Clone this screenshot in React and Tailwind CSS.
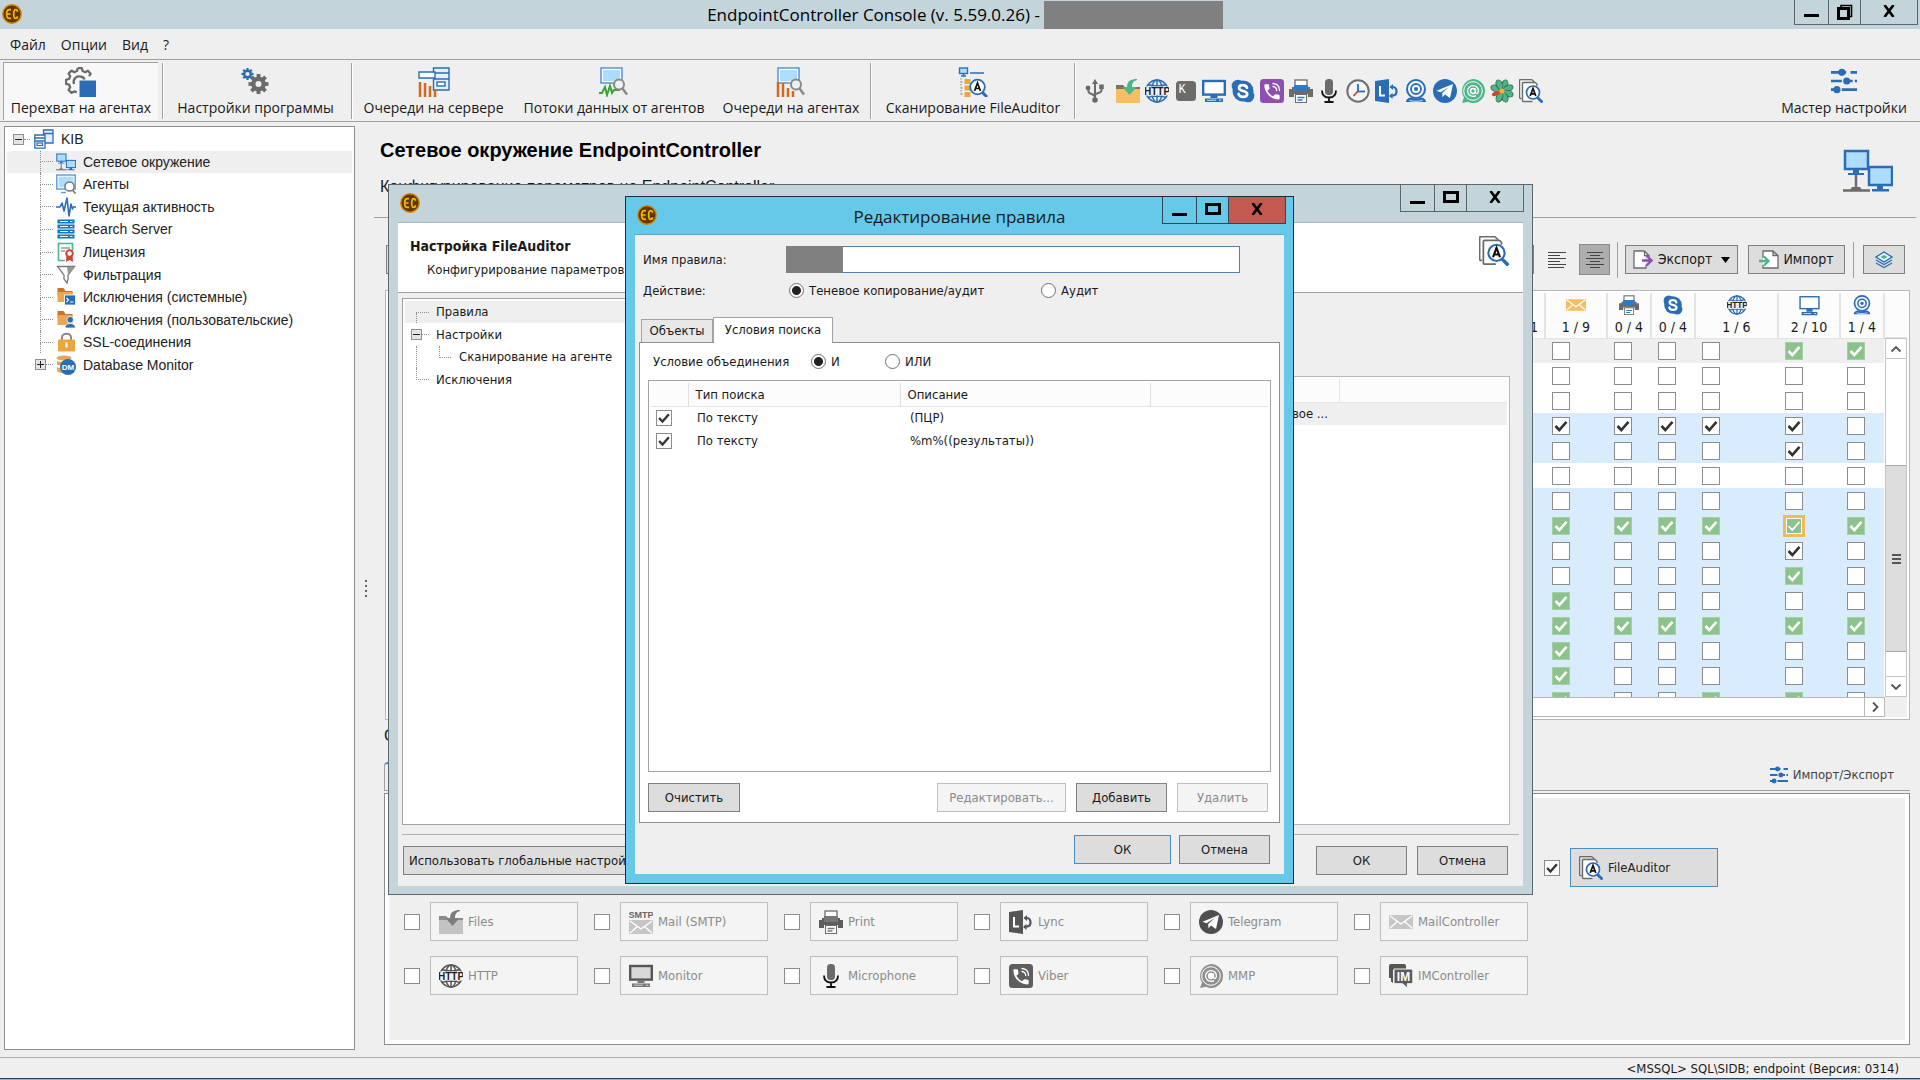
import React from "react";

const TAHOMA = "font-['DejaVu_Sans_Condensed','DejaVu_Sans',sans-serif]";
const SEGOE = "font-['Open_Sans','Noto_Sans',sans-serif]";
const ARIAL = "font-['Liberation_Sans',Arial,sans-serif]";

const BLUE = "#2a6db5";
const SKY = "#addcff";
const GRAY = "#6b6b6b";
const ORANGE = "#f7bd63";
const GREEN = "#4eb489";

function Svg({ size = 24, w, box = 24, boxW, children }) {
  return (
    <svg width={w || size} height={size} viewBox={`0 0 ${boxW || box} ${box}`} fill="none" className="shrink-0" aria-hidden="true">
      {children}
    </svg>
  );
}

/* ---------- icons ---------- */

function EcLogo() {
  return (
    <Svg size={20} box={20}>
      <circle cx="10" cy="10" r="9.2" fill="#5c3800" stroke="#d98200" strokeWidth="1.4" />
      <path d="M9 5.6H7.4C5.6 5.6 4.6 7 4.6 10s1 4.400 2.800 4.400H9M5 10h3.600M15.400 7.800V7.400c0-1.200-.7-1.800-1.700-1.800-1.300 0-2 .9-2 4.400s.7 4.400 2 4.400c1 0 1.700-.6 1.700-1.800v-.4" stroke="#ffb400" strokeWidth="1.7" />
    </Svg>
  );
}

function Usb() {
  return (
    <Svg>
      <path d="M12 4v16M5.500 10v2.500c0 3 6.500 2 6.500 5.500M18.500 10v1.500c0 3-6.500 2-6.500 5" stroke={GRAY} strokeWidth="2" />
      <path d="M12 0l3 5H9z" fill={GRAY} />
      <circle cx="12" cy="21" r="2.800" fill={GRAY} />
      <circle cx="5" cy="9" r="2.400" fill={GRAY} />
      <rect x="16.200" y="5.500" width="4.600" height="4.600" fill={GRAY} />
    </Svg>
  );
}

function Files({ mono }) {
  return (
    <Svg>
      <path d="M0 6h7l2 2h15v3H0z" fill={mono ? "#8a8a8a" : "#7a7463"} />
      <path d="M0 10h24v14H0z" fill={mono ? "#c3c3c3" : ORANGE} />
      <path d="M21 0c-6 0-10 2-10 8H6.500l7 8 7-8H16c0-4 1.500-6 5-7z" fill={mono ? "#7d7d7d" : GREEN} />
    </Svg>
  );
}

function Http({ mono, size = 24 }) {
  const c = mono ? "#555" : BLUE;
  const bg = mono ? "#f4f4f4" : "#efefef";
  return (
    <Svg size={size}>
      <circle cx="12" cy="12" r="11" stroke={c} strokeWidth="1.500" />
      <ellipse cx="12" cy="12" rx="5.500" ry="11" stroke={c} strokeWidth="1.500" />
      <path d="M12 1v22M3 5.500c5 2 13 2 18 0M3 18.500c5-2 13-2 18 0" stroke={c} strokeWidth="1.500" />
      <rect x="0" y="7.500" width="24" height="9" fill={bg} />
      <text x="12" y="16" textAnchor="middle" fontSize="10" fontWeight="700" fontFamily="Liberation Sans" fill="#222">HTTP</text>
    </Svg>
  );
}

function KeyK() {
  return (
    <Svg>
      <rect x="2" y="2" width="20" height="20" rx="3.500" fill={GRAY} />
      <text x="4.500" y="14" fontSize="12" fontFamily="Liberation Mono" fill="#fff">K</text>
    </Svg>
  );
}

function Monitor({ mono, open, size = 24 }) {
  const c = mono ? "#555" : BLUE;
  return (
    <Svg size={size}>
      <rect x="1.200" y="2" width="21.600" height="13.600" stroke={c} strokeWidth={open ? 1.600 : 2.400} fill={mono ? "#d8d8d8" : "#fff"} />
      <path d="M8.500 16h7v3h-7zM3 19.500h18V23H3z" fill={mono ? "#777" : c} />
      <path d="M5 21.200h9M17 21.200h2.500" stroke={mono ? "#ccc" : "#cfe4fa"} strokeWidth="1" />
    </Svg>
  );
}

function Skype({ size = 24 }) {
  return (
    <Svg size={size}>
      <circle cx="12" cy="12" r="10.500" fill={BLUE} />
      <circle cx="7" cy="7" r="6.300" fill={BLUE} />
      <circle cx="17" cy="17" r="6.300" fill={BLUE} />
      <path d="M16 8.800C15.500 7 14 6.200 12 6.200c-2.400 0-4 1.100-4 2.800 0 4 8.200 2 8.200 6 0 1.800-1.700 2.900-4.200 2.900-2.200 0-3.900-.9-4.400-2.900" stroke="#fff" strokeWidth="2.700" strokeLinecap="round" />
    </Svg>
  );
}

function Viber({ mono }) {
  return (
    <Svg>
      <rect x="0" y="0" width="24" height="24" rx="3.500" fill={mono ? "#5e5e5e" : "#8d50b0"} />
      <path transform="translate(1.800 2.600) scale(.85)" d="M6.620 10.790c1.440 2.830 3.760 5.140 6.590 6.590l2.200-2.200c.27-.27.67-.36 1.020-.24 1.120.37 2.330.57 3.570.57.550 0 1 .45 1 1V20c0 .55-.45 1-1 1-9.390 0-17-7.610-17-17 0-.55.450-1 1-1h3.500c.55 0 1 .45 1 1 0 1.250.2 2.450.57 3.570.11.350.03.740-.25 1.020l-2.200 2.200z" fill="#fff" />
      <path d="M13 4.500c4 .3 6.500 3 6.500 7M13 7.500c2.300.3 3.600 1.700 3.700 4" stroke="#fff" strokeWidth="1.300" strokeLinecap="round" />
    </Svg>
  );
}

function Printer({ mono, size = 24 }) {
  return (
    <Svg size={size}>
      <rect x="6" y="1" width="12" height="7" fill="#fff" stroke={GRAY} strokeWidth="1.300" />
      <path d="M0 10h3V8h18v2h3v8h-5v-3H5v3H0z" fill={mono ? "#5e5e5e" : GRAY} />
      <path d="M5 6h14v6H5z" fill={mono ? "#777" : "#2f7ac6"} />
      <rect x="6.500" y="15.500" width="11" height="8" fill="#fff" stroke={GRAY} strokeWidth="1" />
      <path d="M8.500 18.500h7M8.500 21h5" stroke={mono ? "#777" : "#2f7ac6"} strokeWidth="1.300" />
    </Svg>
  );
}

function Mic() {
  return (
    <Svg>
      <rect x="8" y="0" width="8" height="16" rx="3.500" fill={GRAY} />
      <path d="M5 11.500c0 4.500 2.500 7 7 7s7-2.500 7-7M12 18v4.500M7.500 23h9" stroke="#111" strokeWidth="1.800" />
    </Svg>
  );
}

function Clock() {
  return (
    <Svg>
      <circle cx="12" cy="12" r="10.700" fill="#f4f4f4" stroke="#707070" strokeWidth="2" />
      <path d="M12 5v7" stroke={BLUE} strokeWidth="1.800" />
      <path d="M12 12.500h7" stroke={BLUE} strokeWidth="1.800" />
      <path d="M12 12l-4.500 5" stroke="#d1432f" strokeWidth="1.800" />
    </Svg>
  );
}

function Lync({ mono }) {
  const c = mono ? "#555" : BLUE;
  return (
    <Svg>
      <path d="M0 2l14-2v24L0 22z" fill={c} />
      <path d="M5 7v9.500h5" stroke="#fff" strokeWidth="2" />
      <path d="M15.500 8h2c2 0 4 1.500 4 4.500 0 2.500-1.500 4-4 4.200h-2" stroke={c} strokeWidth="2.200" />
      <path d="M18 5l-3.500 3L18 11zM17.500 14v6l-3.500-3z" fill={c} />
    </Svg>
  );
}

function Webcam({ size = 24 }) {
  return (
    <Svg size={size}>
      <circle cx="12" cy="10" r="9" stroke={BLUE} strokeWidth="2" fill="#f3f8fd" />
      <circle cx="12" cy="10" r="5" stroke={BLUE} strokeWidth="1.800" />
      <circle cx="12" cy="10" r="2" fill={BLUE} />
      <path d="M2 23c0-3 3-4.500 5-4.500 3 1.300 7 1.300 10 0 2 0 5 1.500 5 4.500z" fill={BLUE} />
      <path d="M5.500 21.500c4 1 9 1 13 0" stroke="#cfe4fa" strokeWidth="1" />
    </Svg>
  );
}

function Telegram({ mono }) {
  return (
    <Svg>
      <circle cx="12" cy="12" r="12" fill={mono ? "#4f4f4f" : BLUE} />
      <path d="M3.500 11.800L20 5l-3 14-5-3.500-2.500 2.700-.3-4.300L16 8l-8.500 5.300z" fill="#fff" />
    </Svg>
  );
}

function Mmp({ mono }) {
  const c = mono ? "#8f8f8f" : GREEN;
  return (
    <Svg>
      <path d="M12 0a12 12 0 110 24 12 12 0 01-5-1.200L1 24l2-5.500A12 12 0 0112 0z" fill={c} />
      <circle cx="12" cy="12" r="9.300" stroke="#fff" strokeWidth="1" />
      <circle cx="12" cy="12" r="2.400" stroke="#fff" strokeWidth="1.500" fill={mono ? "#fff" : "none"} />
      <path d="M14.500 9.500v3.700c0 2.200 2.900 1.900 2.900-1.200 0-3.300-2.400-5.400-5.400-5.400S6.600 9 6.600 12s2.400 5.400 5.400 5.400c1.200 0 2.200-.3 3-.8" stroke="#fff" strokeWidth="1.300" />
    </Svg>
  );
}

function Flower() {
  const petals = [22, 67, 112, 157, 202, 292, 337];
  return (
    <Svg>
      {petals.map((a) => (
        <ellipse key={a} cx="12" cy="5.200" rx="3.100" ry="5" fill={GREEN} stroke="#2f6f54" strokeWidth=".9" transform={`rotate(${a} 12 12)`} />
      ))}
      <ellipse cx="12" cy="5.600" rx="2.200" ry="4.400" fill="#d1432f" transform="rotate(247 12 12)" />
      <circle cx="12" cy="12" r="2.600" fill="#f5b041" />
    </Svg>
  );
}

function FileAuditor({ size = 24 }) {
  return (
    <Svg size={size}>
      <path d="M2.500 19.500H1.500c-.6 0-1-.4-1-1v-17c0-.6.400-1 1-1h11l3 2.500" stroke={GRAY} strokeWidth="1.300" />
      <path d="M13.500 22.500h-9c-.6 0-1-.4-1-1V4.500c0-.6.400-1 1-1h11c1 0 2.500 1 2.500 2.500v1" stroke={GRAY} strokeWidth="1.400" fill="#fff" />
      <circle cx="14" cy="13.500" r="6.500" fill="#fff" stroke={BLUE} strokeWidth="1.700" />
      <path d="M18.500 18.500l5 5" stroke={BLUE} strokeWidth="2.800" />
      <path d="M11.200 17l2.800-7.500L16.800 17M12.200 14.800h3.600" stroke="#111" strokeWidth="1.700" />
    </Svg>
  );
}

function Sliders({ size = 24 }) {
  return (
    <Svg size={size}>
      <path d="M0 4h14M18 4h6M0 12h10M14 12h6M22 12h2M0 20h6M10 20h14" stroke={BLUE} strokeWidth="2.500" />
      <circle cx="10" cy="4" r="3.300" fill={BLUE} />
      <circle cx="14.500" cy="12" r="3.300" fill={BLUE} />
      <circle cx="5.500" cy="20" r="3.300" fill={BLUE} />
    </Svg>
  );
}

function Mail({ mono, smtp, size = 24 }) {
  const fill = mono ? "#c6c6c6" : ORANGE;
  const y = smtp ? 10 : 5;
  return (
    <Svg size={size}>
      {smtp && (
        <text x="12" y="8" textAnchor="middle" fontSize="9" fontWeight="700" fontFamily="Liberation Sans" fill="#666">SMTP</text>
      )}
      <rect x="0" y={y} width="24" height="14" rx="1" fill={fill} />
      <path d={`M1 ${y + 1}l11 8 11-8M1 ${y + 13}l8-7M23 ${y + 13}l-8-7`} stroke="#fff" strokeWidth="1.400" />
    </Svg>
  );
}

function Im() {
  return (
    <Svg>
      <path d="M0 2C0 .9.9 0 2 0h13a2 2 0 012 2v4H4v13l-2-1.500V14H0z" fill="#555" />
      <path d="M5 5h16.500c1.300 0 2.300 1 2.300 2.300v10.400c0 1.200-.9 2-2 2h-3.500V24l-4.800-4.300H5z" fill="#5c5c5c" stroke="#f4f4f4" strokeWidth="1" />
      <text x="14.500" y="17" textAnchor="middle" fontSize="12" fontWeight="700" fontFamily="Liberation Sans" fill="#fff">IM</text>
    </Svg>
  );
}

function GearShape({ cx, cy, r, color, hole = 0.42, bg = "#efefef" }) {
  return (
    <g transform={`translate(${cx} ${cy}) scale(${r})`}>
      {[0, 45, 90, 135].map((a) => (
        <rect key={a} x="-.19" y="-1" width=".38" height="2" fill={color} transform={`rotate(${a})`} />
      ))}
      <circle r=".74" fill={color} />
      <circle r={hole} fill={bg} />
    </g>
  );
}

function InterceptIcon() {
  return (
    <Svg size={30} box={30} w={32} boxW={32}>
      <path d="M12.800 1h4l.8 3 2.500 1.200 2.800-1.500 2.700 3-1.500 2.600M12.800 1L12 4 9.200 5.200 6.500 3.600 3.600 6.500l1.600 2.800L4 12l-3 .8v4l3 .8 1.200 2.600-1.600 2.800 2.900 2.900 2.700-1.500 2.500 1" stroke={GRAY} strokeWidth="2.300" strokeLinejoin="round" />
      <path d="M9 17c-1.500-4.500 2-8.500 6.500-7.500 2 .3 3.500 1.500 4 3" stroke={GRAY} strokeWidth="2.300" />
      <rect x="14.500" y="13.500" width="16.500" height="16.500" fill={BLUE} />
    </Svg>
  );
}

function GearsIcon() {
  return (
    <Svg size={30} box={30}>
      <GearShape cx={6.5} cy={7} r={6} color={BLUE} hole={0.35} />
      <GearShape cx={17.5} cy={17} r={10} color={GRAY} hole={0.3} />
    </Svg>
  );
}

function ServerQueueIcon() {
  return (
    <Svg size={30} box={30} w={32} boxW={32}>
      <path d="M15.500 1H31v22H15.500zM15.500 6H31M15.500 12H31" stroke={BLUE} strokeWidth="1.400" fill="#e4f1fd" />
      <path d="M1 5h16v6H1z" stroke={BLUE} strokeWidth="1.400" fill="#fff" />
      <rect x="19" y="15" width="8" height="4" stroke={BLUE} strokeWidth="1.400" fill="#fff" />
      <path d="M2 15v15M7 16v14M12 19v11M17 23v7" stroke="#d2691e" strokeWidth="2.500" />
    </Svg>
  );
}

function AgentIcon({ bars }) {
  return (
    <Svg size={30} box={30}>
      <rect x="2" y="1" width="21" height="15" stroke="#5c9bd8" strokeWidth="1.600" fill="#fff" />
      <rect x="4" y="3" width="17" height="11" fill={SKY} />
      {bars ? (
        <path d="M2 15v15M7 16v14M12 21v9M17 24v6" stroke="#d2691e" strokeWidth="2.500" />
      ) : (
        <path d="M0 26h3l3-6 2 8 3-9 2 7 2-3h6" stroke="#35a535" strokeWidth="2" />
      )}
      <circle cx="20" cy="17.500" r="5" fill="#efefef" stroke="#8a8a8a" strokeWidth="2" />
      <path d="M23.500 21.500l4.500 6" stroke="#8a8a8a" strokeWidth="2.500" />
    </Svg>
  );
}

function ScanIcon() {
  return (
    <Svg size={30} box={30}>
      <rect x="1.500" y="1" width="8" height="5.500" fill={SKY} stroke={BLUE} strokeWidth="1.400" />
      <path d="M5.500 7v2.500M3 9h5M12 6h14" stroke={BLUE} strokeWidth="1.600" />
      <path d="M3 11v18M3 15h3M3 21h3M3 27h3" stroke="#888" strokeWidth="1" strokeDasharray="1.500 1.500" />
      <path d="M6.500 12h6v5h-6zM6.500 18.500h6v5h-6zM6.500 25h6v5h-6z" fill="#eda63a" />
      <circle cx="19.500" cy="20" r="7.300" fill="#fff" stroke={BLUE} strokeWidth="1.800" />
      <path d="M24.500 25.500l4.500 4.500" stroke={BLUE} strokeWidth="3" />
      <path d="M16.500 24l3-8 3 8M17.500 21.500h4" stroke="#111" strokeWidth="1.700" />
    </Svg>
  );
}

function NetworkIcon({ size = 20 }) {
  return (
    <Svg size={size} box={44} w={size === 20 ? 20 : 50} boxW={50}>
      <rect x="2" y="2" width="23" height="18" fill={SKY} stroke={BLUE} strokeWidth="2.500" />
      <path d="M10 20h6v4h-6zM5 24h16v2H5z" fill={BLUE} />
      <path d="M13 26v14M0 41.500h27" stroke={GRAY} strokeWidth="2.500" />
      <path d="M9 38h8l2 3H7z" fill={GRAY} />
      <rect x="26" y="18" width="23" height="18" fill={SKY} stroke={BLUE} strokeWidth="2.500" />
      <path d="M34 36h6v4h-6zM29 40h17v2.500H29z" fill={BLUE} />
    </Svg>
  );
}

function TreeIcon({ name }) {
  const icons = {
    kib: (
      <>
        <path d="M9.500 1H19v13H9.500zM9.500 4.500H19" stroke={BLUE} strokeWidth="1.300" fill="#e4f1fd" />
        <path d="M.8 6H11v13.200H.8zM.8 9H11M.8 12H11" stroke={BLUE} strokeWidth="1.300" fill="#fff" />
        <rect x="3" y="14" width="5.500" height="2.500" stroke={BLUE} strokeWidth="1.200" />
      </>
    ),
    agents: (
      <>
        <rect x=".8" y="1" width="18.400" height="14" stroke="#5c9bd8" strokeWidth="1.400" fill="#fff" />
        <rect x="2.500" y="2.700" width="15" height="10.500" fill={SKY} />
        <path d="M5 18.500h5" stroke="#5c9bd8" strokeWidth="1.400" />
        <circle cx="13.500" cy="12.500" r="4.600" fill="#fff" stroke="#777" strokeWidth="1.500" />
        <path d="M16.500 16l3 3.500" stroke="#777" strokeWidth="1.800" />
      </>
    ),
    activity: <path d="M0 10h4l2-4 2 8 3-13 2 18 2-12 1.500 5 1-2H20" stroke={BLUE} strokeWidth="1.600" strokeLinejoin="round" />,
    server: (
      <>
        {[0, 5, 10, 15].map((y) => (
          <g key={y}>
            <rect x="1.500" y={y + 0.500} width="17" height="4" fill="#0f79c0" />
            <path d={`M4 ${y + 2.500}h8M14 ${y + 2.500}h2.500`} stroke="#fff" strokeWidth="1.200" />
          </g>
        ))}
      </>
    ),
    license: (
      <>
        <path d="M9 18.500H2.500v-17h14V9" stroke={GREEN} strokeWidth="1.600" fill="#fff" />
        <path d="M5 6h9M5 9h4" stroke="#999" strokeWidth="1.300" />
        <path d="M10.500 12l-.5 8 3.500-2 3.500 2-.5-8z" fill="#cf4435" />
        <circle cx="13.500" cy="11.500" r="3.300" fill="#fff" stroke="#cf4435" strokeWidth="2" />
      </>
    ),
    filter: (
      <>
        <path d="M1.500 1.500h17L12 10v4l-1 4-3-4v-4z" stroke="#7a7a7a" strokeWidth="1.300" fill="#fff" />
        <path d="M11 2h7l-6 8z" fill="#9a9a9a" />
      </>
    ),
    sys: (
      <>
        <path d="M1.500 1h6l2 3h7v4h-15z" fill="#c8742c" />
        <path d="M1.500 5h15v10h-15z" fill="#eaa651" />
        <rect x="8.500" y="8" width="11" height="10" fill={BLUE} stroke="#fff" strokeWidth=".8" />
        <path d="M10.500 11l2 2-2 2M14 15h3.500" stroke="#fff" strokeWidth="1.100" />
      </>
    ),
    user: (
      <>
        <path d="M1.500 1h6l2 3h7v4h-15z" fill="#c8742c" />
        <path d="M1.500 5h15v10h-15z" fill="#eaa651" />
        <path d="M9 18c0-3 2-4.500 5-4.500s5.500 1.500 5.500 4.500z" fill={BLUE} stroke="#fff" strokeWidth=".8" />
        <circle cx="14.200" cy="9.800" r="3.300" fill={BLUE} stroke="#fff" strokeWidth=".8" />
      </>
    ),
    ssl: (
      <>
        <path d="M6 9V5.500C6 3 8 1.800 10.500 1.800S15 3 15 5.500V9" stroke="#8a8a8a" strokeWidth="2" />
        <rect x="2" y="7.500" width="17" height="12" rx="1" fill="#eaa63f" />
        <path d="M10.500 10.500v5" stroke="#fff" strokeWidth="2" />
      </>
    ),
    dm: (
      <>
        <ellipse cx="8" cy="3" rx="7.500" ry="2.500" fill="#eaa651" />
        <path d="M1 6c2 1.500 12 1.500 14 0v4H1zM1 12c2 1.500 5 1.500 7 1v5c-3 0-6-.5-7-2z" fill="#eaa651" />
        <circle cx="12" cy="12" r="8" fill={BLUE} />
        <text x="12" y="15" textAnchor="middle" fontSize="8" fontWeight="700" fontFamily="Liberation Sans" fill="#fff">DM</text>
      </>
    ),
  };
  if (name === "net") return <NetworkIcon />;
  return (
    <Svg size={20} box={20}>
      {icons[name]}
    </Svg>
  );
}

/* ---------- small controls ---------- */

function Check({ label, state, small }) {
  // state: undefined | "on" | "green" | "focus"
  const size = small ? "w-4 h-4" : "w-[18px] h-[18px]";
  const skin =
    state === "green"
      ? "bg-[#8cc28c] border-[#a5cfa5]"
      : state === "focus"
        ? "bg-[#8cc28c] border-2 border-white outline-3 outline-[#f5b95c] -outline-offset-1"
        : "bg-white border-[#8c8c8c]";
  return (
    <span className={`relative inline-flex shrink-0 ${size}`}>
      <input type="checkbox" aria-label={label} defaultChecked={!!state} className={`appearance-none border ${size} ${skin}`} />
      {state && (
        <svg viewBox="0 0 18 18" className="pointer-events-none absolute inset-0 h-full w-full" fill="none" aria-hidden="true">
          <path d="M3.500 9l3.800 4L14.500 4.800" stroke={state === "on" ? "#333" : "#fff"} strokeWidth={state === "focus" ? 1.800 : 2.600} />
        </svg>
      )}
    </span>
  );
}

function Radio({ name, label, checked, className = "" }) {
  return (
    <label className={`flex items-center gap-[5px] ${className}`}>
      <input
        type="radio"
        name={name}
        defaultChecked={checked}
        className="h-[15px] w-[15px] shrink-0 appearance-none rounded-full border border-[#707070] bg-white checked:bg-[radial-gradient(circle,#222_4px,#fff_5px)]"
      />
      {label}
    </label>
  );
}

function Button({ children, disabled, primary, label, className = "" }) {
  const skin = disabled
    ? "border-[#b9bfc2] bg-[#f4f4f4] text-[#8b8b8b]"
    : primary
      ? "border-[#4a8fc4] bg-[#dddddd] text-[#1a1a1a]"
      : "border-[#808080] bg-[#dddddd] text-[#1a1a1a]";
  return (
    <button type="button" aria-label={label} disabled={disabled} className={`flex h-[29px] items-center justify-center whitespace-nowrap border ${skin} ${className}`}>
      {children}
    </button>
  );
}

function WindowButtons({ main, active }) {
  const line = active ? "border-[#2b4a56]" : "border-[#5d676c]";
  return (
    <div className={`flex border-b border-l ${line} ${main ? "h-[25px]" : "h-[27px]"}`}>
      <button type="button" aria-label="Свернуть" className={`flex w-[34px] items-end justify-center border-r pb-[7px] ${line}`}>
        <span className="h-[3px] w-[15px] bg-black" />
      </button>
      <button type="button" aria-label={main ? "Восстановить" : "Развернуть"} className={`flex w-[32px] items-center justify-center border-r ${line}`}>
        {main ? (
          <Svg size={16} box={16}>
            <path d="M4 3V1.500h10.500v11H13" stroke="#000" strokeWidth="1.600" />
            <rect x="1.500" y="4.500" width="10" height="10" stroke="#000" strokeWidth="3" />
          </Svg>
        ) : (
          <span className="mb-[2px] h-[12px] w-[16px] border-3 border-black" />
        )}
      </button>
      <button type="button" aria-label="Закрыть" className={`flex w-[57px] items-center justify-center border-r pb-[2px] ${line} ${active ? "bg-[#c4594f]" : ""}`}>
        <Svg size={12} box={12}>
          <path d="M1.500 0l9 12M10.500 0l-9 12" stroke="#000" strokeWidth="2.600" />
        </Svg>
      </button>
    </div>
  );
}

function Expander({ open }) {
  return (
    <button type="button" aria-label={open ? "Свернуть узел" : "Развернуть узел"} className="flex h-[11px] w-[11px] shrink-0 items-center justify-center border border-[#909090] bg-[#e4e4e4]">
      <svg width="9" height="9" viewBox="0 0 9 9" aria-hidden="true">
        <path d={open ? "M1 4.500h7" : "M1 4.500h7M4.500 1v7"} stroke="#222" />
      </svg>
    </button>
  );
}

const DOT = "border-dotted border-[#909090]";

function Branch({ first, last, width }) {
  return (
    <span className={`flex h-full shrink-0 flex-col ${width}`}>
      <span className={`flex-1 border-b ${DOT} ${first ? "" : "border-l"}`} />
      <span className={`flex-1 ${DOT} ${last ? "" : "border-l"}`} />
    </span>
  );
}

function Dash({ width }) {
  return <span className={`shrink-0 border-b ${DOT} ${width}`} />;
}

/* ---------- main window pieces ---------- */

function ToolButton({ icon, label, className = "", pressed }) {
  return (
    <button
      type="button"
      className={`flex flex-col items-center justify-end gap-[2px] whitespace-nowrap pb-[3px] text-[14px] leading-[18px] ${className} ${pressed ? "border-l border-t border-[#a0a0a0] bg-[#f8f8f8]" : ""}`}
    >
      {icon}
      {label}
    </button>
  );
}

function Sep() {
  return <span className="my-[1px] w-[2px] shrink-0 self-stretch border-l border-[#a0a0a0] bg-white" />;
}

function Toolbar() {
  const services = [
    ["Файлы", <Files />], ["HTTP", <Http />], ["Клавиатура", <KeyK />], ["Монитор", <Monitor />], ["Skype", <Skype />],
    ["Viber", <Viber />], ["Печать", <Printer />], ["Микрофон", <Mic />], ["Время", <Clock />], ["Lync", <Lync />], ["Камера", <Webcam />],
    ["Telegram", <Telegram />], ["MMP", <Mmp />], ["ICQ", <Flower />], ["FileAuditor", <FileAuditor />],
  ];
  return (
    <div className="flex h-[62px] items-stretch border-b border-[#a0a0a0] pb-[1px] pl-[3px] pr-[4px] pt-[2px]">
      <ToolButton pressed className="mr-[4px] w-[155px]" icon={<InterceptIcon />} label="Перехват на агентах" />
      <Sep />
      <ToolButton className="w-[187px] pr-[4px]" icon={<GearsIcon />} label="Настройки программы" />
      <Sep />
      <ToolButton className="w-[163px] pr-[2px]" icon={<ServerQueueIcon />} label="Очереди на сервере" />
      <ToolButton className="w-[196px]" icon={<AgentIcon />} label="Потоки данных от агентов" />
      <ToolButton className="w-[158px]" icon={<AgentIcon bars />} label="Очереди на агентах" />
      <Sep />
      <ToolButton className="w-[202px]" icon={<ScanIcon />} label="Сканирование FileAuditor" />
      <Sep />
      <button type="button" aria-label="USB" className="ml-[7px] mr-[9px]">
        <Usb />
      </button>
      <div className="flex w-[427px] items-center justify-between">
        {services.map(([name, icon]) => (
          <button type="button" key={name} aria-label={name}>
            {icon}
          </button>
        ))}
      </div>
      <ToolButton className="ml-auto w-[140px] pr-[4px]" icon={<span className="mb-[3px]"><Sliders size={26} /></span>} label="Мастер настройки" />
    </div>
  );
}

const TREE = [
  ["net", "Сетевое окружение"],
  ["agents", "Агенты"],
  ["activity", "Текущая активность"],
  ["server", "Search Server"],
  ["license", "Лицензия"],
  ["filter", "Фильтрация"],
  ["sys", "Исключения (системные)"],
  ["user", "Исключения (пользовательские)"],
  ["ssl", "SSL-соединения"],
];

function SideTree() {
  return (
    <nav className={`w-[351px] shrink-0 border border-[#8c8f96] bg-white p-[1px] text-[14px] text-[#222] ${ARIAL}`}>
      <ul className="flex h-[248px] flex-col px-[1px] leading-[20px]">
        <li className="flex flex-1 items-center pl-[6px]">
          <Expander open />
          <Dash width="mr-[4px] w-[6px]" />
          <TreeIcon name="kib" />
          <span className="ml-[7px]">KIB</span>
        </li>
        {TREE.map(([icon, label], i) => (
          <li key={icon} className={`flex flex-1 items-center pl-[33px] ${i === 0 ? "bg-[#efefef]" : ""}`}>
            <Branch width="mr-[3px] w-[13px]" />
            <TreeIcon name={icon} />
            <span className="ml-[7px]">{label}</span>
          </li>
        ))}
        <li className="flex flex-1 items-center pl-[28px]">
          <Expander />
          <Dash width="mr-[3px] w-[7px]" />
          <TreeIcon name="dm" />
          <span className="ml-[7px]">Database Monitor</span>
        </li>
      </ul>
    </nav>
  );
}

// g = green, k = black tick, f = focused green, . = empty
const GRID = [
  ["....gg", "bg-[#efefef]"],
  ["......", ""],
  ["......", ""],
  ["kkkkk.", "bg-[#d8ecfd]"],
  ["....k.", "bg-[#d8ecfd]"],
  ["......", ""],
  ["......", "bg-[#d8ecfd]"],
  ["ggggfg", "bg-[#d8ecfd]"],
  ["....k.", "bg-[#d8ecfd]"],
  ["....g.", "bg-[#d8ecfd]"],
  ["g.....", "bg-[#d8ecfd]"],
  ["gggggg", "bg-[#d8ecfd]"],
  ["g.....", "bg-[#d8ecfd]"],
  ["g.....", "bg-[#d8ecfd]"],
  ["g..gg.", "bg-[#d8ecfd]"],
];
const STATE = { g: "green", k: "on", f: "focus" };
const COLS = [
  ["Mail", <Mail size={20} />, "1 / 9"],
  ["Print", <Printer size={20} />, "0 / 4"],
  ["Skype", <Skype size={20} />, "0 / 4"],
  ["HTTP", <Http size={20} />, "1 / 6"],
  ["Monitor", <Monitor size={21} open />, "2 / 10"],
  ["Webcam", <Webcam size={20} />, "1 / 4"],
];

function Chevron({ d }) {
  return (
    <svg width="12" height="12" viewBox="0 0 12 12" fill="none" aria-hidden="true">
      <path d={d} stroke="#555" strokeWidth="1.800" />
    </svg>
  );
}

function AgentGrid() {
  return (
    <div className="ml-[11px] mr-[6px] border border-[#b4b8c0] bg-white p-[2px]">
      <div className="flex h-[404px]">
        <div className="min-w-0 flex-1 overflow-hidden">
          <table className="w-full table-fixed border-collapse">
            <colgroup>
              <col />
              <col className="w-[62px]" />
              <col className="w-[62px]" />
              <col className="w-[44px]" />
              <col className="w-[44px]" />
              <col className="w-[83px]" />
              <col className="w-[62px]" />
              <col className="w-[44px]" />
            </colgroup>
            <thead>
              <tr className="h-[45px] border-b border-[#e4e4e4] bg-[#fcfcfc] text-[14px]">
                <th />
                <th className="border-r-2 border-[#e4e4e4] pb-[2px] pr-[6px] text-right align-bottom font-normal leading-[18px]">1 / 1</th>
                {COLS.map(([name, icon, count]) => (
                  <th key={name} className="border-r-2 border-[#e4e4e4] p-0 font-normal leading-[18px]">
                    <span className="flex flex-col items-center gap-[2px] whitespace-nowrap">
                      <span className="flex h-[22px] items-center">{icon}</span>
                      {count}
                    </span>
                  </th>
                ))}
              </tr>
            </thead>
            <tbody>
              {GRID.map(([row, bg], i) => (
                <tr key={i} className={`h-[25px] ${bg}`}>
                  <td />
                  <td />
                  {[...row].map((c, j) => (
                    <td key={j} className="p-0 pl-[7px]">
                      <span className="flex items-center">
                        <Check label={`${COLS[j][0]} ${i + 1}`} state={STATE[c]} />
                      </span>
                    </td>
                  ))}
                </tr>
              ))}
            </tbody>
          </table>
        </div>
        <div className="flex w-[22px] shrink-0 flex-col">
          <div className="h-[45px] border-b border-[#e4e4e4] bg-[#fcfcfc]" />
          <div className="flex flex-1 flex-col border-x border-[#c4c4c4] bg-white">
            <button type="button" aria-label="Вверх" className="flex h-[21px] items-center justify-center border-y border-[#c4c4c4]">
              <Chevron d="M1.500 8.500L6 4l4.500 4.500" />
            </button>
            <div className="h-[106px]" />
            <div className="flex h-[187px] flex-col items-center justify-center gap-[2px] border-y border-[#a8a8a8] bg-[#dcdcdc]">
              <span className="h-[2px] w-[9px] bg-[#555]" />
              <span className="h-[2px] w-[9px] bg-[#555]" />
              <span className="h-[2px] w-[9px] bg-[#555]" />
            </div>
            <button type="button" aria-label="Вниз" className="mt-auto flex h-[21px] items-center justify-center border-y border-[#c4c4c4]">
              <Chevron d="M1.500 3.500L6 8l4.500-4.500" />
            </button>
          </div>
        </div>
      </div>
      <div className="flex h-[20px] bg-[#efefef] pr-[22px]">
        <div className="flex flex-1 justify-end border border-[#b8b8b8] bg-white">
          <button type="button" aria-label="Вправо" className="flex w-[20px] items-center justify-center border-l border-[#b8b8b8]">
            <Chevron d="M4 1.500L8.500 6 4 10.500" />
          </button>
        </div>
      </div>
    </div>
  );
}

const SERVICES = [
  ["Files", <Files mono />], ["Mail (SMTP)", <Mail mono smtp />], ["Print", <Printer mono />], ["Lync", <Lync mono />], ["Telegram", <Telegram mono />], ["MailController", <Mail mono />],
  ["HTTP", <Http mono />], ["Monitor", <Monitor mono />], ["Microphone", <Mic />], ["Viber", <Viber mono />], ["MMP", <Mmp mono />], ["IMController", <Im />],
];

function Service({ name, icon, on, className = "" }) {
  return (
    <div className={`flex items-center gap-[10px] ${className}`}>
      <Check small label={name} state={on ? "on" : undefined} />
      <button
        type="button"
        className={`flex h-[39px] w-[148px] items-center gap-[5px] border pl-[8px] ${on ? "border-[#4a8fc4] bg-[#dddddd] text-[#222]" : "border-[#b9bfc2] bg-[#f4f4f4] text-[#8b8b8b]"}`}
      >
        {icon}
        {name}
      </button>
    </div>
  );
}

function Lines({ center }) {
  return (
    <svg width="18" height="18" viewBox="0 0 18 18" aria-hidden="true">
      <path d={center ? "M1 1.500h16M4 4.500h10M0 7.500h18M4 10.500h10M0 13.500h18M4 16.500h10" : "M0 1.500h18M0 4.500h12M0 7.500h18M0 10.500h12M0 13.500h18M0 16.500h16"} stroke="#444" strokeWidth="1" />
    </svg>
  );
}

function ListBar() {
  return (
    <div className={`flex h-[72px] items-center pr-[11px] pt-[11px] text-[14px] ${ARIAL}`}>
      <Button label="Фильтр" className="ml-[12px] w-[130px]" />
      <Button label="Вид" className="ml-auto mr-[14px] w-[60px]" />
      <button type="button" aria-label="По левому краю" className="mr-[13px]">
        <Lines />
      </button>
      <button type="button" aria-label="По центру" className="flex h-[31px] w-[31px] items-center justify-center border border-[#8c8c8c] bg-[#adadad]">
        <Lines center />
      </button>
      <span className="mx-[7px] h-[36px] w-px bg-[#a0a0a0]" />
      <Button className={`w-[113px] gap-[5px] ${TAHOMA}`}>
        <Svg size={20} box={20}>
          <path d="M11.500 1H1v17h12v-3M11.500 1v4.500H16M11.500 1L16 5.500V7" stroke={GRAY} strokeWidth="1.300" fill="#fff" />
          <path d="M9 10.500h9M13.500 5.500l5 5-5 5" stroke="#8d50b0" strokeWidth="2.300" />
        </Svg>
        Экспорт
        <svg width="9" height="6" viewBox="0 0 9 6" className="ml-[4px]" aria-hidden="true">
          <path d="M0 0h9L4.500 6z" fill="#000" />
        </svg>
      </Button>
      <Button className={`ml-[10px] w-[97px] gap-[4px] ${TAHOMA}`}>
        <Svg size={20} box={20}>
          <path d="M4 8V1h10l5 4.500V18H4v-3M14 1v4.500h5" stroke={GRAY} strokeWidth="1.300" fill="#fff" />
          <path d="M0 11h9M5 6.500l4.500 4.500L5 15.500" stroke={GREEN} strokeWidth="2.300" />
        </Svg>
        Импорт
      </Button>
      <span className="ml-[8px] mr-[9px] h-[36px] w-px bg-[#a0a0a0]" />
      <Button label="Слои" className="w-[42px]">
        <Svg size={18} box={18}>
          <path d="M1 9l8 4.500L17 9M1 12l8 4.500 8-4.500" stroke={BLUE} strokeWidth="1.300" />
          <path d="M9 1l8 5-8 5-8-5z" stroke={BLUE} strokeWidth="1.300" fill="#e8f3fc" />
          <path d="M9 4l3.500 2L9 8 5.500 6z" fill={GREEN} />
        </Svg>
      </Button>
    </div>
  );
}

/* ---------- dialogs ---------- */

function FileAuditorDialog() {
  return (
    <section role="dialog" aria-label="Настройка FileAuditor" className="absolute left-[388px] top-[184px] flex h-[711px] w-[1145px] flex-col border border-[#5d676c] bg-[#c3d5db] px-[9px] pb-[8px]">
      <header className="flex h-[37px] shrink-0 justify-between">
        <span className="ml-[2px] mt-[8px]"><EcLogo /></span>
        <span className="-mr-px"><WindowButtons /></span>
      </header>
      <div className="flex flex-1 flex-col border-t border-[#a7b9bf] bg-[#efefef]">
        <div className="flex h-[70px] items-start justify-between border-b border-[#a0a0a0] bg-white pl-[12px] pr-[14px] pt-[13px]">
          <div>
            <h2 className="text-[14px] font-bold leading-[20px]">Настройка FileAuditor</h2>
            <p className="ml-[17px] mt-[4px] leading-[20px]">Конфигурирование параметров</p>
          </div>
          <FileAuditor size={30} />
        </div>
        <div className="ml-[4px] mr-[13px] mt-[5px] flex flex-1 gap-[10px]">
          <ul className="w-[300px] border border-[#a0a3aa] bg-white p-[2px] leading-[20px]">
            <li className="flex h-[22px] items-center bg-[#efefef] pl-[11px]">
              <Branch first width="w-[13px]" />
              <span className="ml-[7px]">Правила</span>
            </li>
            <li className="flex h-[23px] items-center pl-[6px]">
              <Expander open />
              <Dash width="w-[7px]" />
              <span className="ml-[7px]">Настройки</span>
            </li>
            <li className="flex h-[22px] items-center pl-[11px]">
              <span className={`h-full border-l ${DOT}`} />
              <Branch last width="ml-[22px] w-[12px]" />
              <span className="ml-[8px]">Сканирование на агенте</span>
            </li>
            <li className="flex h-[23px] items-center pl-[11px]">
              <Branch last width="w-[13px]" />
              <span className="ml-[7px]">Исключения</span>
            </li>
          </ul>
          <div className="flex flex-1 flex-col pt-[78px]">
            <div className="flex-1 border border-[#b4b8c0] bg-white p-[2px]">
              <table className="w-full table-fixed border-collapse">
                <thead>
                  <tr className="h-[23px] border-b border-[#e4e4e4] bg-[#fcfcfc]">
                    <th className="border-r border-[#e4e4e4]" />
                    <th className="w-[168px]" />
                  </tr>
                </thead>
                <tbody>
                  <tr className="h-[23px] bg-[#efefef]">
                    <td className="pr-[11px] text-right">Теневое ...</td>
                    <td />
                  </tr>
                </tbody>
              </table>
            </div>
          </div>
        </div>
        <div className="mx-[4px] mt-[9px] border-t border-[#b0b0b0]" />
        <footer className="flex gap-[10px] pb-[11px] pl-[5px] pr-[15px] pt-[11px]">
          <Button className="mr-auto px-[5px]">Использовать глобальные настройки</Button>
          <Button className="w-[91px]">ОК</Button>
          <Button className="w-[91px]">Отмена</Button>
        </footer>
      </div>
    </section>
  );
}

function RuleDialog() {
  const rows = ["(ПЦР)", "%m%((результаты))"];
  return (
    <section role="dialog" aria-label="Редактирование правила" className="absolute left-[625px] top-[196px] flex h-[688px] w-[669px] flex-col border border-[#222d33] bg-[#66c9ea] px-[9px] pb-[9px]">
      <header className="grid h-[37px] shrink-0 grid-cols-[1fr_auto_1fr]">
        <span className="ml-[2px] mt-[8px]"><EcLogo /></span>
        <h2 className={`pt-[8px] text-[17px] leading-[24px] ${SEGOE}`}>Редактирование правила</h2>
        <span className="-mr-[2px] justify-self-end"><WindowButtons active /></span>
      </header>
      <div className="flex flex-1 flex-col border-t border-[#5aa6c0] bg-[#efefef] pt-[11px]">
        <div className="flex items-center pl-[8px]">
          <label htmlFor="rule-name" className="w-[143px]">Имя правила:</label>
          <span className="h-[27px] w-[57px] bg-[#808080]" />
          <input id="rule-name" type="text" className="h-[27px] w-[397px] border border-l-0 border-[#4f82b0] bg-white px-[4px]" />
        </div>
        <fieldset className="mt-[8px] flex h-[24px] items-center pl-[8px]">
          <span className="w-[146px]">Действие:</span>
          <Radio name="action" label="Теневое копирование/аудит" checked className="w-[252px]" />
          <Radio name="action" label="Аудит" />
        </fieldset>
        <div role="tablist" className="ml-[4px] mt-[12px] flex items-end">
          <button type="button" role="tab" aria-selected="false" className="ml-[2px] h-[23px] w-[72px] whitespace-nowrap border border-b-0 border-[#a0a3aa] bg-[#e8e8e8] leading-[22px]">
            Объекты
          </button>
          <button type="button" role="tab" aria-selected="true" className="relative -mb-px h-[26px] w-[120px] whitespace-nowrap border border-b-0 border-[#a0a3aa] bg-white pb-[2px]">
            Условия поиска
          </button>
        </div>
        <div className="mx-[4px] flex flex-1 flex-col border border-[#8c8f96] bg-white px-[8px] pb-[10px] pt-[9px]">
          <fieldset className="flex h-[22px] items-center pl-[5px]">
            <span className="w-[158px]">Условие объединения</span>
            <Radio name="join" label="И" checked className="w-[74px]" />
            <Radio name="join" label="ИЛИ" />
          </fieldset>
          <div className="mt-[6px] flex-1 border border-[#a0a3aa] p-[2px]">
            <table className="w-full table-fixed border-collapse text-left">
              <colgroup>
                <col className="w-[37px]" />
                <col className="w-[212px]" />
                <col className="w-[250px]" />
                <col />
              </colgroup>
              <thead>
                <tr className="h-[23px] border-b border-[#e4e4e4] bg-[#fcfcfc]">
                  <th className="border-r border-[#e0e0e0]" />
                  <th className="border-r border-[#e0e0e0] p-0 pl-[7px] font-normal">Тип поиска</th>
                  <th className="border-r border-[#e0e0e0] p-0 pl-[7px] font-normal">Описание</th>
                  <th />
                </tr>
              </thead>
              <tbody>
                {rows.map((text) => (
                  <tr key={text} className="h-[23px]">
                    <td className="p-0 pl-[5px]">
                      <span className="flex"><Check small label={text} state="on" /></span>
                    </td>
                    <td className="p-0 pl-[9px]">По тексту</td>
                    <td className="p-0 pl-[10px]">{text}</td>
                    <td />
                  </tr>
                ))}
              </tbody>
            </table>
          </div>
          <div className="mt-[11px] flex gap-[10px] pr-[3px]">
            <Button className="mr-auto w-[92px]">Очистить</Button>
            <Button disabled className="w-[129px]">Редактировать...</Button>
            <Button className="w-[91px]">Добавить</Button>
            <Button disabled className="w-[91px]">Удалить</Button>
          </div>
        </div>
        <footer className="flex justify-end gap-[8px] pb-[10px] pr-[14px] pt-[12px]">
          <Button primary className="w-[97px]">ОК</Button>
          <Button className="w-[91px]">Отмена</Button>
        </footer>
      </div>
    </section>
  );
}

/* ---------- page ---------- */

export default function App() {
  return (
    <div className={`relative flex min-h-screen flex-col overflow-hidden bg-[#efefef] text-[13px] text-[#1a1a1a] ${TAHOMA}`}>
      <header className={`grid h-[29px] grid-cols-[1fr_auto_1fr] bg-[#c3d5db] ${SEGOE}`}>
        <span className="ml-[2px] mt-[4px]"><EcLogo /></span>
        <h1 className="flex items-center whitespace-pre pl-[10px] text-[17px] leading-[28px] text-black">
          EndpointController Console (v. 5.59.0.26) -<span className="ml-[4px] mt-px h-[28px] w-[179px] bg-[#808080]" />
        </h1>
        <span className="mr-[2px] justify-self-end"><WindowButtons main /></span>
      </header>

      <nav className={`flex h-[31px] items-center gap-[15px] border-b border-[#a0a0a0] pl-[10px] text-[14px] ${SEGOE}`}>
        <button type="button">Файл</button>
        <button type="button">Опции</button>
        <button type="button">Вид</button>
        <button type="button">?</button>
      </nav>

      <div className={SEGOE}><Toolbar /></div>

      <main className="flex flex-1 pl-[4px] pr-[4px]">
        <div className="flex pb-[7px] pt-[4px]">
          <SideTree />
          <div className="flex w-[19px] flex-col items-center justify-center gap-[3px] pl-[3px]">
            {[0, 1, 2, 3].map((i) => (
              <span key={i} className="h-[2px] w-[2px] bg-[#666]" />
            ))}
          </div>
        </div>

        <div className="flex min-w-0 flex-1 flex-col">
          <header className="flex h-[96px] justify-between border-b border-[#a0a0a0] pl-[6px]">
            <div className={`pt-[16px] ${ARIAL}`}>
              <h2 className="text-[20px] font-bold leading-[24px] text-black">Сетевое окружение EndpointController</h2>
              <p className="mt-[13px] whitespace-nowrap text-[16px] leading-[24px]">Конфигурирование параметров на EndpointController</p>
            </div>
            <span className="mr-[23px] mt-[27px]"><NetworkIcon size={44} /></span>
          </header>

          <ListBar />
          <AgentGrid />

          <div className="ml-[10px] mr-[6px] flex h-[71px] justify-between border-b border-[#a0a0a0]">
            <div className="flex flex-col justify-between pt-[6px]">
              <span className={`text-[16px] leading-[20px] ${ARIAL}`}>Сервисы</span>
              <button type="button" aria-label="Вкладка" className="h-[28px] w-[100px] rounded-t-sm border-l border-t-2 border-l-[#a0a0a0] border-t-[#3a8fe8]" />
            </div>
            <a href="#transfer" className="mb-[5px] flex items-center gap-[5px] self-end pr-[16px] leading-[20px] text-[#444]">
              <Sliders size={18} />
              Импорт/Экспорт
            </a>
          </div>
          <section className="mb-[12px] ml-[10px] mr-[6px] mt-[2px] flex-1 border border-[#8c8f96] bg-white p-[4px]">
            <div className="h-full bg-[#efefef] pl-[15px] pt-[50px]">
              <div className="grid grid-cols-[repeat(7,190px)] gap-y-[15px]">
                <Service name="FileAuditor" icon={<FileAuditor />} on className="col-start-7" />
                {SERVICES.map(([name, icon], i) => (
                  <Service key={name} name={name} icon={icon} className={i % 6 === 0 ? "col-start-1" : ""} />
                ))}
              </div>
            </div>
          </section>
        </div>
      </main>

      <footer className="flex h-[21px] items-center justify-end border-t border-[#b0b0b0] pr-[21px] pt-[2px]">
        &lt;MSSQL&gt; SQL\SIDB; endpoint (Версия: 0314)
      </footer>
      <div className="h-[2px] border-t border-[#333f45] bg-[#66c9ea]" />

      <FileAuditorDialog />
      <RuleDialog />
    </div>
  );
}
